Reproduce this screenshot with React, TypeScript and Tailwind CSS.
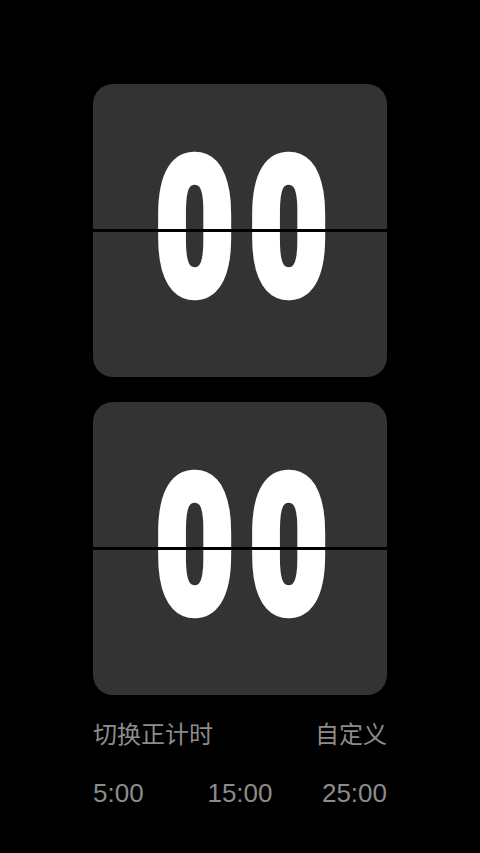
import React from "react";

const presets = ["5:00", "15:00", "25:00"];

function FlipCard({ value }: { value: string }) {
  return (
    <div className="relative h-[293px] w-full rounded-[20px] bg-[#333333] overflow-hidden flex items-center justify-center">
      <div className="flex gap-[21px] -translate-y-[2px]">
        {value.split("").map((d, i) => (
          <span
            key={i}
            className="inline-block w-[73px] text-center text-white font-bold leading-none text-[133px] scale-y-[1.4] [-webkit-text-stroke:9px_#fff] [font-family:Roboto,'Liberation_Sans',sans-serif]"
          >
            {d}
          </span>
        ))}
      </div>
      {/* split line of the flip card */}
      <div className="absolute left-0 right-0 top-[145px] h-[3px] bg-black" />
    </div>
  );
}

export default function App() {
  return (
    <div className="w-full h-[853px] bg-black flex flex-col px-[93px] pt-[84px] [font-family:'Liberation_Sans','Noto_Sans_CJK_SC',sans-serif]">
      <div className="flex flex-col gap-[25px]">
        <FlipCard value="00" />
        <FlipCard value="00" />
      </div>

      <div className="mt-[28px] flex items-center justify-between text-[24px] leading-none text-[#8c8c8c]">
        <span>切换正计时</span>
        <span>自定义</span>
      </div>

      <div className="mt-[33px] grid grid-cols-3 items-center text-[26px] leading-none text-[#8c8c8c]">
        <span className="text-left">{presets[0]}</span>
        <span className="text-center">{presets[1]}</span>
        <span className="text-right">{presets[2]}</span>
      </div>
    </div>
  );
}
